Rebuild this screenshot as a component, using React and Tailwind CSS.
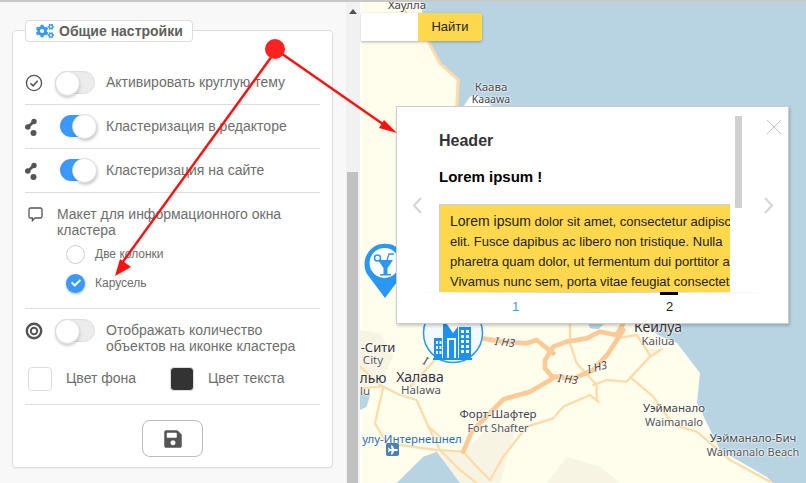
import React from "react";
import { FaCogs, FaSave, FaPlane, FaCheck } from "react-icons/fa";

function Toggle({ on }) {
  if (on) {
    return (
      <div className="relative w-[38px] h-[23px] ml-[4px] mr-[9px] shrink-0">
        <div className="absolute left-[1px] top-0 w-[36px] h-[22px] rounded-full bg-[#3b99fc]" />
        <div className="absolute right-0 -top-[1px] w-[25px] h-[25px] rounded-full bg-white border border-[#ddd] shadow-[1px_2px_3px_rgba(0,0,0,0.2)]" />
      </div>
    );
  }
  return (
    <div className="relative w-[40px] h-[24px] mr-[11px] shrink-0">
      <div className="absolute left-0 top-0 w-[40px] h-[23px] rounded-full bg-[#ececec] border border-[#ddd]" />
      <div className="absolute left-0 top-0 w-[25px] h-[25px] rounded-full bg-white border border-[#ddd] shadow-[0_2px_3px_rgba(0,0,0,0.18)]" />
    </div>
  );
}

const CheckIcon = () => (
  <svg width="18" height="18" viewBox="0 0 18 18" fill="none" stroke="#555" strokeWidth="1.4">
    <circle cx="9" cy="9" r="7.6" />
    <path d="M5.5 9.2l2.6 2.6 4.6-5" strokeWidth="1.6" />
  </svg>
);
const NodesIcon = () => (
  <svg width="13" height="18" viewBox="0 0 13 18" fill="#555">
    <path d="M9 3.500L2.800 9" stroke="#555" strokeWidth="3" fill="none" />
    <circle cx="9" cy="3.500" r="2.700" />
    <circle cx="2.800" cy="9" r="2.800" />
    <circle cx="8.500" cy="15" r="3" />
  </svg>
);
const ChatIcon = () => (
  <svg width="15" height="15" viewBox="0 0 15 15" fill="none" stroke="#555" strokeWidth="1.3">
    <path d="M2.500 1h10a1.500 1.500 0 0 1 1.500 1.500v7a1.500 1.500 0 0 1-1.500 1.500H7l-2.600 2.600V11H2.500A1.500 1.500 0 0 1 1 9.500v-7A1.500 1.500 0 0 1 2.500 1z" />
  </svg>
);
const TargetIcon = () => (
  <svg width="18" height="18" viewBox="0 0 18 18" fill="none" stroke="#555">
    <circle cx="9" cy="9" r="7.2" strokeWidth="2.4" />
    <circle cx="9" cy="9" r="3.2" strokeWidth="2" />
  </svg>
);

function Row({ icon, on, children }) {
  return (
    <div className="flex items-center h-[44px] border-b border-[#ddd]">
      <div className="w-[30px] shrink-0 flex items-center">{icon}</div>
      <Toggle on={on} />
      <span className="whitespace-nowrap">{children}</span>
    </div>
  );
}

function Panel() {
  return (
    <div className="w-[346px] shrink-0 bg-[#f8f8f8] pl-[12px] pt-[28px]">
      <div className="relative w-[321px] h-[438px] bg-white border border-[#ddd] rounded-[4px] pt-[30px] px-[12px] text-[14px] text-[#6e6e6e] shadow-[0_1px_1px_rgba(0,0,0,0.04)]">
        <div className="absolute left-[12px] -top-[11px] w-[168px] h-[22px] bg-white border border-[#ddd] rounded-[4px] flex items-center pl-[10px] gap-[5px] font-bold text-[#5f5f5f]">
          <FaCogs className="text-[#3b99fc] text-[18px]" />
          <span className="whitespace-nowrap">Общие настройки</span>
        </div>
        <Row icon={<CheckIcon />}>Активировать круглую тему</Row>
        <Row icon={<NodesIcon />} on>Кластеризация в редакторе</Row>
        <Row icon={<NodesIcon />} on>Кластеризация на сайте</Row>
        <div className="border-b border-[#ddd] h-[116px] pt-[13px]">
          <div className="flex leading-[16px]">
            <div className="w-[32px] pl-[3px] pt-[1px] shrink-0"><ChatIcon /></div>
            <span className="w-[250px]">Макет для информационного окна кластера</span>
          </div>
          <div className="ml-[41px] mt-[6px] text-[12px]">
            <div className="flex items-center h-[20px] gap-[10px]">
              <div className="w-[19px] h-[19px] rounded-full bg-white border border-[#ccc]" />
              <span>Две колонки</span>
            </div>
            <div className="flex items-center h-[20px] gap-[10px] mt-[9px]">
              <div className="w-[19px] h-[19px] rounded-full bg-[#3b99fc] flex items-center justify-center shadow-[0_1px_3px_rgba(0,0,0,0.3)]">
                <FaCheck className="text-white text-[10px]" />
              </div>
              <span>Карусель</span>
            </div>
          </div>
        </div>
        <div className="flex pt-[10px] leading-[16px]">
          <div className="w-[30px] pt-[3px] shrink-0"><TargetIcon /></div>
          <Toggle />
          <span className="w-[200px] mt-[3px] whitespace-nowrap">Отображать количество<br />объектов на иконке кластера</span>
        </div>
        <div className="flex items-center h-[48px] mt-[3px] border-b border-[#ddd] pb-[4px]">
          <div className="w-[24px] h-[24px] ml-[3px] rounded-[4px] bg-white border border-[#ddd]" />
          <span className="ml-[14px] w-[104px]">Цвет фона</span>
          <div className="w-[24px] h-[24px] rounded-[4px] bg-[#333] border border-[#ddd]" />
          <span className="ml-[14px]">Цвет текста</span>
        </div>
        <div className="flex justify-center mt-[15px]">
          <div className="w-[61px] h-[37px] rounded-[8px] border border-[#bbb] bg-white flex items-center justify-center">
            <FaSave className="text-[#555] text-[20px]" />
          </div>
        </div>
      </div>
    </div>
  );
}

function Scrollbar() {
  return (
    <div className="relative w-[14px] shrink-0 bg-[#f1f1f1]">
      <svg className="absolute left-[3px] top-[7px]" width="8" height="5" viewBox="0 0 8 5"><path d="M4 0l4 5H0z" fill="#505050" /></svg>
      <div className="absolute left-[1px] right-[2px] top-[170px] bottom-0 bg-[#c1c1c1]" />
    </div>
  );
}

const labels = [
  ["Хаулла", 47, 5, 11.5, "#444"],
  ["Каава", 131, 87, 11.5, "#444"],
  ["Kaaawa", 131, 99, 10.5, "#444"],
  ["Кейлуа", 298, 327, 14, "#333"],
  ["Kailua", 298, 341, 11.5, "#555"],
  ["-Сити", 18, 347, 13, "#333"],
  ["City", 13, 360, 11.5, "#555"],
  ["Халава", 60, 377, 14, "#333"],
  ["Halawa", 61, 390, 11.5, "#555"],
  ["лью", 13, 378, 14, "#333"],
  ["lu", 5, 391, 11.5, "#555"],
  ["Форт-Шафтер", 138, 414, 11.5, "#444"],
  ["Fort Shafter", 138, 427, 11, "#555"],
  ["улу-Интернешнел", 52, 439, 11.5, "#2a6fb0"],
  ["Уэйманало", 314, 408, 11.5, "#444"],
  ["Waimanalo", 314, 421, 11, "#555"],
  ["Уэйманало-Бич", 393, 438, 11.5, "#444"],
  ["Waimanalo Beach", 393, 451, 11, "#555"],
];
const shields = [
  ["I H3", 146, 342, 6],
  ["I H3", 209, 379, 6],
  ["I H3", 238, 367, -15],
  ["I", 75, 361, 20],
];

function MapCanvas() {
  return (
    <div className="relative flex-1 overflow-hidden bg-[#b8d4e3] font-['Noto_Sans',sans-serif]">
      <svg className="absolute inset-0" width="446" height="481" viewBox="0 2 446 481">
        <path d="M1 0H60L68 42L80 64L97 78L96 105L280 320L298 335L317 343L340 373L337 403L360 450L407 477L413 483H1Z" fill="#fffdec" />
        <rect x="0" width="1" height="483" fill="#fff" />
        <g transform="translate(0,310) scale(0.33333)" fill="none" strokeLinejoin="round" strokeLinecap="round">
          <path d="M300 519L230 430L310 425L390 350L470 350L420 519Z" fill="#f8f4e4" />
          <path d="M560 519L620 440L720 470L780 519Z" fill="#f8f4e4" />
          <path d="M0 60L60 70L100 140L60 220L0 230Z" fill="#f8f4e4" />
          <path d="M110 519L190 440L230 425L300 519Z" fill="#b8d4e3" />
          <path d="M685 40L735 40L715 58L690 55Z" fill="#b8d4e3" />
          <path d="M0 240L30 255L20 290L0 300Z" fill="#b8d4e3" />
          <path d="M870 120L905 118L880 135Z" fill="#f5f0e0" />
          <g stroke="#fddcaa" strokeWidth="7">
            <path d="M630 40L630 100L650 160L710 225L710 270" />
            <path d="M700 225L740 210L800 215L870 140L905 118" />
            <path d="M770 85L830 75L870 135" />
            <path d="M815 205L880 260L940 345L1010 365L1110 450L1230 515" />
            <path d="M390 510L430 440L500 350L580 325L610 290L690 255L715 275" />
            <path d="M0 170L60 225L120 255L170 270L205 350L240 420L300 480L350 519" />
            <path d="M70 230L45 340L80 400L230 420L310 425" />
            <path d="M205 350L240 380M60 230L0 235M390 510L350 470L310 425" />
            <path d="M150 230L225 150" />
          </g>
          <g stroke="#fdc996" strokeWidth="14">
            <path d="M310 425L335 365L430 268L510 245L580 205L555 175L555 150L580 110L620 95L680 85L720 65L770 75L790 40" />
            <path d="M365 85L430 95L500 100L530 90L580 130" />
            <path d="M580 200L640 205L700 180L745 130L790 60" />
          </g>
        </g>
        <g transform="scale(0.33333)" fill="none" strokeLinejoin="round">
          <path d="M205 125L240 190L295 240L290 320" stroke="#fddcaa" strokeWidth="9" />
          <path d="M310 320L330 290L350 285L400 320Z" fill="#fff" />
          <path d="M130 20L140 40" stroke="#fddcaa" strokeWidth="6" />
        </g>
        <path d="M25 298L7 274A20.500 20.500 0 1 1 43 274Z" fill="#2a96f5" />
        <circle cx="24.500" cy="263" r="15" fill="#fff" />
        <circle cx="17.500" cy="258" r="3" fill="#fff" stroke="#2a96f5" strokeWidth="1.500" />
        <path d="M18 260H33L27.500 268V274H31V275.500H20V274H23.500V268Z" fill="#2a96f5" />
        <path d="M27 260L29 254H34" stroke="#2a96f5" strokeWidth="1.300" fill="none" />
        <circle cx="93" cy="333" r="29.500" fill="#f2f9ff" stroke="#2a96f5" strokeWidth="1.500" />
        <g fill="#1e90f0">
          <path d="M74 338h8v20h-8zM83 322h15v36H83zM99 327h12v31H99zM73 358h39v2H73z" />
        </g>
        <g fill="#f2f9ff">
          <path d="M76 341h2v3h-2zM79.500 341h2v3h-2zM76 346h2v3h-2zM79.500 346h2v3h-2zM76 351h2v3h-2zM79.500 351h2v3h-2zM101 330h3v3h-3zM106 330h3v3h-3zM101 335h3v3h-3zM106 335h3v3h-3zM101 340h3v3h-3zM106 340h3v3h-3zM101 345h3v3h-3zM106 345h3v3h-3zM101 350h3v3h-3zM106 350h3v3h-3z" />
          <path d="M87 338h9v20h-2v-18h-5v18h-2z" />
        </g>
        <path d="M84 320h19l-10 13z" fill="#fff" />
      </svg>
      {labels.map(([text, x, y, size, color]) => (
        <span
          key={text}
          className="absolute -translate-x-1/2 -translate-y-1/2 whitespace-nowrap leading-none [text-shadow:0_0_2px_#fff,0_0_2px_#fff,0_0_2px_#fff]"
          style={{ left: x, top: y - 2, fontSize: size, color }}
        >
          {text}
        </span>
      ))}
      {shields.map(([text, x, y, rot], i) => (
        <span
          key={i}
          className="absolute whitespace-nowrap leading-none text-[11px] italic text-[#444] [text-shadow:0_0_2px_#fff,0_0_2px_#fff]"
          style={{ left: x - 11, top: y - 8, transform: `rotate(${rot}deg)` }}
        >
          {text}
        </span>
      ))}
      <div className="absolute left-[26px] top-[441px] w-[13px] h-[13px] bg-[#4a80b8] rounded-[2px] flex items-center justify-center">
        <FaPlane className="text-white text-[10px]" />
      </div>
      <div className="absolute left-[1px] top-[11px] h-[28px] flex shadow-[0_1px_3px_rgba(0,0,0,0.3)] rounded-r-[3px]">
        <div className="w-[57px] bg-white" />
        <div className="w-[64px] bg-[#ffd84d] rounded-r-[3px] flex items-center justify-center text-[13px] text-[#222] font-['Liberation_Sans',sans-serif]">
          Найти
        </div>
      </div>
      <Popup />
    </div>
  );
}

function Popup() {
  return (
    <div className="absolute left-[36px] top-[104px] w-[393px] h-[218px] bg-white border border-[#ccc] shadow-[1px_2px_3px_rgba(0,0,0,0.2)] font-['Liberation_Sans',sans-serif]">
      <div className="absolute left-[338px] top-[9px] w-[7px] h-[92px] bg-[#d0d0d0]" />
      <svg className="absolute left-[369px] top-[12px]" width="16" height="16" viewBox="0 0 16 16" stroke="#c4c4c4" strokeWidth="1" fill="none">
        <path d="M1 1l14 14M15 1L1 15" />
      </svg>
      <svg className="absolute left-[15px] top-[90px]" width="11" height="17" viewBox="0 0 11 17" stroke="#d4d4d4" strokeWidth="2" fill="none"><path d="M9 1L2 8.500 9 16" /></svg>
      <svg className="absolute left-[366px] top-[90px]" width="11" height="17" viewBox="0 0 11 17" stroke="#d4d4d4" strokeWidth="2" fill="none"><path d="M2 1l7 7.500L2 16" /></svg>
      <div className="pl-[42px] pt-[25px]">
        <div className="text-[16px] leading-[18px] font-bold text-[#333]">Header</div>
        <div className="mt-[18px] text-[15px] leading-[18px] font-bold text-black">Lorem ipsum !</div>
        <div className="mt-[18px] w-[291px] h-[88px] overflow-hidden bg-[#ffd84d] border-l border-t border-[#c8cfd8] pl-[10px] pt-[6px] text-[13px] leading-[20px] text-[#222] whitespace-nowrap">
          <div><span className="text-[14px]">Lorem ipsum</span> dolor sit amet, consectetur adipiscing</div>
          <div>elit. Fusce dapibus ac libero non tristique. Nulla</div>
          <div>pharetra quam dolor, ut fermentum dui porttitor a</div>
          <div>Vivamus nunc sem, porta vitae feugiat consectetur</div>
        </div>
      </div>
      <div className="absolute left-[13px] top-[185px] w-[367px] h-[1px] bg-gradient-to-r from-transparent via-[#ccc] to-transparent" />
      <div className="absolute left-[263px] top-[185px] w-[18px] h-[3px] bg-black" />
      <span className="absolute left-[115px] top-[192px] text-[13px] leading-[16px] text-[#3b99fc]">1</span>
      <span className="absolute left-[269px] top-[192px] text-[13px] leading-[16px] text-[#222]">2</span>
    </div>
  );
}

export default function App() {
  return (
    <div className="relative w-[806px] h-[483px] overflow-hidden flex border-t-2 border-[#c8c8c8] font-['Liberation_Sans',sans-serif]">
      <Panel />
      <Scrollbar />
      <MapCanvas />
      <svg className="absolute left-0 -top-[2px] pointer-events-none" width="806" height="483" viewBox="0 0 806 483">
        <path d="M275 49L390 129" stroke="#ff1010" strokeWidth="2.400" fill="none" />
        <path d="M397 133L379 128L384 120Z" fill="#ff1010" />
        <path d="M272 56L122 263" stroke="#ff1010" strokeWidth="2.400" fill="none" />
        <path d="M115 276L120 259L131 267Z" fill="#ff1010" />
        <circle cx="275" cy="49" r="10" fill="#ff2020" />
      </svg>
    </div>
  );
}
